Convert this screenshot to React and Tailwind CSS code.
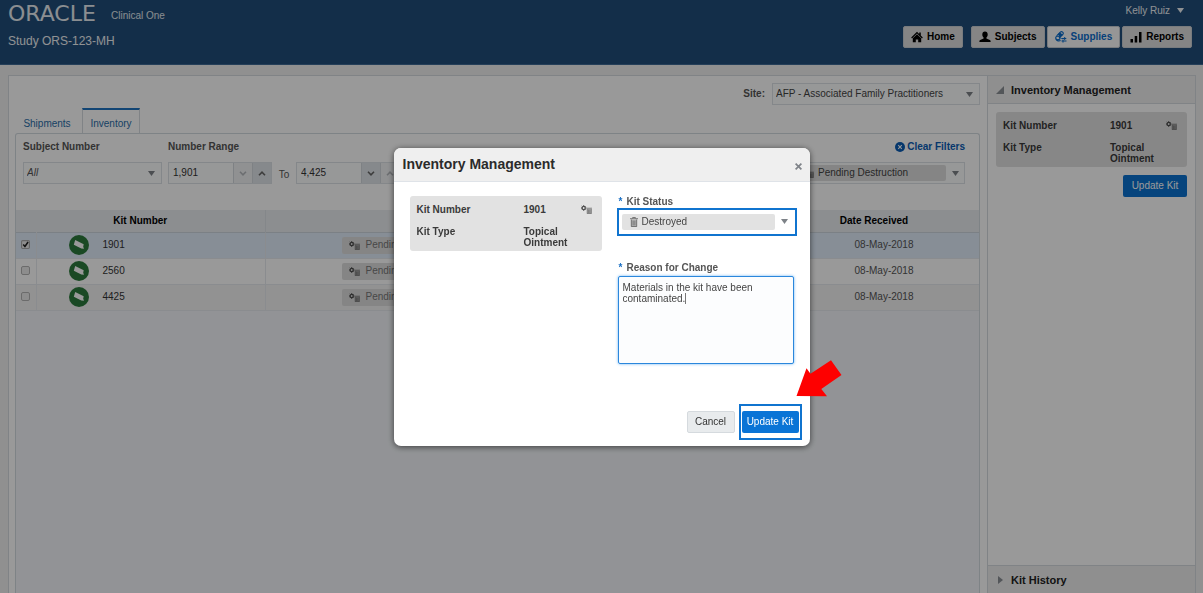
import React from "react";

const kits = [
  { id: "1901", selected: true, date: "08-May-2018" },
  { id: "2560", selected: false, date: "08-May-2018" },
  { id: "4425", selected: false, date: "08-May-2018" },
];

function Caret({ className = "text-[#7d8288]" }) {
  return (
    <svg className={"h-[5px] w-[7px] shrink-0 " + className} viewBox="0 0 7 5" fill="currentColor" aria-hidden="true">
      <path d="M0 0h7L3.5 5z" />
    </svg>
  );
}

function Chevron({ up, className }) {
  return (
    <svg className={"h-[5px] w-2 " + className} viewBox="0 0 8 5" fill="none" stroke="currentColor" strokeWidth="1.6" aria-hidden="true">
      <path d={up ? "M1 4.2 4 1.2l3 3" : "M1 .8l3 3 3-3"} />
    </svg>
  );
}

function HomeIcon() {
  return (
    <svg className="h-3 w-3" viewBox="0 0 12 12" fill="currentColor" aria-hidden="true">
      <path d="M6 .8 8.2 3V1.4h1.6v3.2l2 2-.8.8L6 2.6 1 7.400l-.8-.8z" />
      <path d="M6 3.300 10.200 7.300V11.300H7.200V8.500H4.800V11.300H1.800V7.300z" />
    </svg>
  );
}

function PersonIcon() {
  return (
    <svg className="h-3 w-3" viewBox="0 0 12 12" fill="currentColor" aria-hidden="true">
      <path d="M6 .6c1.700 0 2.700 1.200 2.700 2.800 0 1.300-.5 2.500-1.300 3.100v1l3.400 1.400c.6.3.8.7.8 1.300v.8H.4v-.8c0-.6.2-1 .8-1.300l3.400-1.400v-1C3.800 5.900 3.300 4.700 3.300 3.400 3.300 1.800 4.300.6 6 .6z" />
    </svg>
  );
}

function SuppliesIcon() {
  return (
    <svg className="h-3 w-3" viewBox="0 0 12 12" fill="none" stroke="currentColor" aria-hidden="true">
      <path d="M1.600 4.800 5.300 1.200a1.700 1.700 0 0 1 2.500 2.300L4 7" strokeWidth="1.100" />
      <path d="M2.600 3.600 5 1.300l2.600 2.500L5.200 6z" fill="currentColor" stroke="none" />
      <ellipse cx="2.900" cy="7" rx="2.200" ry="1.700" strokeWidth="1.100" />
      <path d="M1 8.300c.8 1.600 3 2 4.600 1.200" strokeWidth="1.200" />
      <path d="M6.300 7.500h5M9.700 6v3M6.500 10h5M8 8.600v3" strokeWidth="1" />
    </svg>
  );
}

function BarsIcon() {
  return (
    <svg className="h-3 w-3" viewBox="0 0 12 12" fill="currentColor" aria-hidden="true">
      <path d="M.5 8H3v3.500H.5zM4.700 5h2.500v6.500H4.700zM9 1h2.500v10.500H9z" />
    </svg>
  );
}

function TrashIcon() {
  return (
    <svg className="h-[10px] w-2 shrink-0" viewBox="0 0 8 10" aria-hidden="true">
      <path d="M1 2.500h6V10H1z" fill="#b5b5b5" />
      <path d="M0 1.700h8M2.600 1.500V.5h2.800v1M1.300 2.500v7h5.400v-7M3.100 3.500v5M4.900 3.500v5" fill="none" stroke="#6c6c6c" strokeWidth=".9" />
    </svg>
  );
}

function PendingIcon() {
  return (
    <svg className="h-[9px] w-[11px] shrink-0" viewBox="0 0 11 9" fill="none" aria-hidden="true">
      <circle cx="2.700" cy="3" r="1.600" stroke="#4c4c4c" strokeWidth="1.300" />
      <path d="M2.700 0v1M2.700 5v1M0 3h1M4.400 3h1M.7 1l.7.7M4 4.300l.7.7M.7 5l.7-.7M4 1.700l.7-.7" stroke="#4c4c4c" strokeWidth=".8" />
      <path d="M6 3.500h4.500V9H6z" fill="#a8a8a8" />
      <path d="M5.400 3.200H11M6.200 4v4.700h4.100V4M7.600 4.500v3.600M8.900 4.500v3.600" stroke="#737373" strokeWidth=".8" />
    </svg>
  );
}

function KitIcon() {
  return (
    <svg className="h-5 w-5" viewBox="0 0 20 20" aria-hidden="true">
      <circle cx="10" cy="10" r="10" fill="#2c7b3c" />
      <path d="M6.200 4.900 14.700 9.200 14.200 11.800 15 13.800 12.300 13.500 4.800 9.700z" fill="#fff" />
    </svg>
  );
}

function NavButton({ icon, children, active }) {
  return (
    <button
      type="button"
      className={
        "flex h-[22px] items-center gap-1 rounded-[2px] border border-[#c9cdd2] px-[7px] font-bold " +
        (active ? "bg-[#fbfbfb] text-[#0a6ccb]" : "bg-[#dedede] text-black")
      }
    >
      {icon}
      {children}
    </button>
  );
}

function Spinner({ label, value, downEnabled, upEnabled }) {
  return (
    <div className="flex h-[22px] w-[104px] border border-[#dde2e6] bg-[#fcfdfe]">
      <input aria-label={label} defaultValue={value} className="w-0 flex-1 bg-transparent px-1 text-[#333] outline-none" />
      <button
        type="button"
        aria-label={"Decrease " + label}
        className={"flex w-[19px] items-center justify-center border-l border-[#d3d7dc] " + (downEnabled ? "bg-[#dfe4e9]" : "bg-[#f0f2f4]")}
      >
        <Chevron className={downEnabled ? "text-[#666]" : "text-[#b4b8bc]"} />
      </button>
      <button
        type="button"
        aria-label={"Increase " + label}
        className={"flex w-[19px] items-center justify-center border-l border-[#d3d7dc] " + (upEnabled ? "bg-[#dfe4e9]" : "bg-[#f0f2f4]")}
      >
        <Chevron up className={upEnabled ? "text-[#666]" : "text-[#b4b8bc]"} />
      </button>
    </div>
  );
}

function KitCard() {
  return (
    <dl className="grid grid-cols-[107px_1fr_auto] gap-y-[11px] rounded-[3px] bg-[#e2e2e2] px-[7px] pt-2 pb-[3px] font-bold leading-[11px] text-[#3a3a3a]">
      <dt>Kit Number</dt>
      <dd>1901</dd>
      <dd className="pr-[3px] pt-px">
        <PendingIcon />
      </dd>
      <dt>Kit Type</dt>
      <dd className="col-span-2 w-[60px]">Topical Ointment</dd>
    </dl>
  );
}

function Header() {
  return (
    <header className="flex h-[65px] shrink-0 justify-between border-b border-[#3f6a94] bg-[#204e7a] pl-2 pr-[11px] text-white">
      <div>
        <div className="flex h-7 items-center">
          <div className="w-[103px] font-['DejaVu_Sans',sans-serif] text-[22px] leading-6 text-[#e8edf2]">ORACLE</div>
          <div className="pt-[3px] text-[#e3eaf0]">Clinical One</div>
        </div>
        <h1 className="pt-[5px] text-[12px] leading-4 text-[#f0f3f6]">Study ORS-123-MH</h1>
      </div>
      <div className="flex flex-col items-end">
        <button type="button" className="mr-2 flex h-[26px] items-center gap-[7px] pb-[5px] text-[#eef2f5]">
          Kelly Ruiz
          <Caret className="text-[#eef2f5]" />
        </button>
        <nav className="flex gap-[2px]">
          <div className="mr-[6px]">
            <NavButton icon={<HomeIcon />}>Home</NavButton>
          </div>
          <NavButton icon={<PersonIcon />}>Subjects</NavButton>
          <NavButton icon={<SuppliesIcon />} active>
            Supplies
          </NavButton>
          <NavButton icon={<BarsIcon />}>Reports</NavButton>
        </nav>
      </div>
    </header>
  );
}

function Filters() {
  return (
    <div className="flex h-[76px] items-start gap-[6px] pl-[7px] pr-[14px] pt-[7px]">
      <div className="w-[139px]">
        <label htmlFor="subject" className="block h-[21px] font-bold leading-3 text-[#555]">
          Subject Number
        </label>
        <div className="flex h-[22px] items-center border border-[#dde2e6] bg-[#fcfdfe] pr-[6px]">
          <select id="subject" className="w-0 flex-1 appearance-none bg-transparent px-[3px] italic text-[#555] outline-none">
            <option>All</option>
          </select>
          <Caret />
        </div>
      </div>
      <fieldset>
        <legend className="block h-[21px] font-bold leading-3 text-[#555]">Number Range</legend>
        <div className="flex items-center">
          <Spinner label="range start" value="1,901" upEnabled />
          <span className="w-6 pt-1 text-center text-[#555]">To</span>
          <Spinner label="range end" value="4,425" downEnabled />
        </div>
      </fieldset>
      <div className="ml-auto w-[172px]">
        <div className="flex h-[21px] items-start justify-end">
          <button type="button" className="flex items-center gap-[2px] font-bold leading-3 text-[#0a5cb5]">
            <svg className="h-[10px] w-[10px]" viewBox="0 0 10 10" aria-hidden="true">
              <circle cx="5" cy="5" r="5" fill="currentColor" />
              <path d="M3.200 3.200l3.600 3.600M6.800 3.200 3.200 6.800" stroke="#fff" strokeWidth="1.100" />
            </svg>
            Clear Filters
          </button>
        </div>
        <div className="flex h-[22px] items-center gap-[6px] border border-[#dde2e6] bg-[#fcfdfe] pl-[3px] pr-[5px]">
          <div className="flex h-4 flex-1 items-center gap-1 rounded-[2px] bg-[#dedede] pl-[6px]">
            <PendingIcon />
            <select aria-label="Status filter" className="w-0 flex-1 appearance-none bg-transparent text-[#444] outline-none">
              <option>Pending Destruction</option>
            </select>
          </div>
          <Caret />
        </div>
      </div>
    </div>
  );
}

function KitTable() {
  return (
    <table className="w-full table-fixed border-collapse">
      <colgroup>
        <col className="w-[20px]" />
        <col className="w-[229px]" />
        <col />
        <col className="w-[210px]" />
      </colgroup>
      <thead>
        <tr className="h-[22px] border-b border-[#cdd6de] bg-[#eaedf0] text-black">
          <th colSpan={2} className="border-r border-[#dde2e6] font-bold">Kit Number</th>
          <th className="font-bold">Status</th>
          <th className="font-bold">Date Received</th>
        </tr>
      </thead>
      <tbody className="text-[#333]">
        {kits.map((kit, i) => (
          <tr
            key={kit.id}
            className={"h-[26px] border-b border-[#e6eaee] " + (kit.selected ? "bg-[#e1edfb]" : i % 2 ? "bg-white" : "bg-[#f3f3f3]")}
          >
            <td className="border-r border-[#e6eaee] p-0 align-top">
              <label className="block pl-[5px] pt-[7px]">
                <input
                  type="checkbox"
                  aria-label={"Select kit " + kit.id}
                  defaultChecked={kit.selected}
                  className="peer block h-[9px] w-[9px] appearance-none rounded-[2px] border border-[#b3b3b3] bg-[#ececec] checked:hidden"
                />
                <svg className="hidden h-[9px] w-[9px] peer-checked:block" viewBox="0 0 8 8" aria-hidden="true">
                  <rect x=".5" y=".5" width="7" height="7" rx="1" fill="#eee" stroke="#aaa" />
                  <path d="M2 4l1.500 1.700L6.300 1.800" fill="none" stroke="#222" strokeWidth="1.400" />
                </svg>
              </label>
            </td>
            <td className="border-r border-[#e6eaee] p-0">
              <div className="flex items-center gap-[14px] pl-8">
                <KitIcon />
                {kit.id}
              </div>
            </td>
            <td className="p-0">
              <div className="ml-[76px] flex h-[17px] w-[150px] items-center gap-[6px] rounded-[2px] bg-[#dedede] pl-[7px] text-[#777]">
                <PendingIcon />
                Pending Destruction
              </div>
            </td>
            <td className="p-0 pl-5 text-center text-[#555]">{kit.date}</td>
          </tr>
        ))}
      </tbody>
    </table>
  );
}

function Inventory() {
  return (
    <section className="flex min-w-0 flex-1 flex-col pl-[6px] pr-[7px] pt-[7px]">
      <div className="flex items-center justify-end gap-[7px]">
        <label htmlFor="site" className="font-bold text-[#555]">
          Site:
        </label>
        <div className="flex h-[22px] w-52 items-center border border-[#dde2e6] bg-[#fcfdfe] pr-[6px]">
          <select id="site" className="w-0 flex-1 appearance-none bg-transparent px-[3px] text-[#444] outline-none">
            <option>AFP - Associated Family Practitioners</option>
          </select>
          <Caret />
        </div>
      </div>
      <div role="tablist" className="-mb-px mt-[3px] flex h-[26px] text-[#2a6da8]">
        <button type="button" role="tab" aria-selected="false" className="w-[67px] pr-[3px] pt-[5px] text-center">
          Shipments
        </button>
        <button type="button" role="tab" aria-selected="true" className="w-[58px] border-x border-t-2 border-x-[#d6dbe0] border-t-[#1f74c1] bg-white pt-[3px] text-center">
          Inventory
        </button>
      </div>
      <div className="flex flex-1 flex-col rounded-t-[3px] border-x border-t border-[#d3dae0]">
        <Filters />
        <div className="flex-1 bg-[#f3f6fa]">
          <KitTable />
        </div>
      </div>
    </section>
  );
}

function Sidebar() {
  return (
    <aside className="flex w-52 shrink-0 flex-col border-l border-[#d6dbe0]">
      <h2>
        <button type="button" className="flex h-7 w-full items-center gap-[7px] border-b border-[#d6dbe0] bg-[#efefef] pl-2 text-[11px] font-bold text-[#222]">
          <svg className="h-2 w-2" viewBox="0 0 8 8" fill="#8a8f95" aria-hidden="true">
            <path d="M8 0v8H0z" />
          </svg>
          Inventory Management
        </button>
      </h2>
      <div className="flex flex-1 flex-col items-stretch gap-2 p-2">
        <KitCard />
        <button type="button" className="h-[22px] w-16 self-end rounded-[2px] bg-[#0a72d1] text-white">
          Update Kit
        </button>
      </div>
      <h2>
        <button type="button" className="flex h-7 w-full items-center gap-2 border-t border-[#d6dbe0] bg-[#efefef] pl-[10px] text-[11px] font-bold text-[#222]">
          <svg className="h-2 w-[5px]" viewBox="0 0 5 8" fill="#8a8f95" aria-hidden="true">
            <path d="M0 0l5 4-5 4z" />
          </svg>
          Kit History
        </button>
      </h2>
    </aside>
  );
}

function Modal() {
  return (
    <div className="fixed inset-0 flex items-center justify-center bg-black/40">
      <div role="dialog" aria-modal="true" aria-labelledby="dialog-title" className="relative w-[416px] rounded-[7px] bg-white shadow-[0_1px_6px_rgba(0,0,0,0.6)]">
        <div className="flex h-[34px] items-center justify-between rounded-t-[7px] border-b border-[#dfe3e8] bg-[#efefef] pl-[9px] pr-2">
          <h2 id="dialog-title" className="text-[14px] font-bold leading-5 text-[#2b2b2b]">
            Inventory Management
          </h2>
          <button type="button" aria-label="Close" className="pt-1 text-[#7f8389]">
            <svg className="h-[7px] w-[7px]" viewBox="0 0 7 7" stroke="currentColor" strokeWidth="1.700" aria-hidden="true">
              <path d="M.6.6l5.800 5.800M6.400.6.600 6.400" />
            </svg>
          </button>
        </div>
        <div className="flex items-start justify-between pl-4 pr-[13px] pt-[14px]">
          <div className="w-48">
            <KitCard />
          </div>
          <div className="w-[180px]">
            <label htmlFor="status" className="flex h-3 gap-1 font-bold leading-3 text-[#555]">
              <span className="pl-[2px] text-[#1c70c4]">*</span>
              Kit Status
            </label>
            <div className="flex h-7 items-center gap-[6px] border-2 border-[#1074cf] pl-[3px] pr-[7px]">
              <div className="flex h-4 flex-1 items-center gap-1 rounded-[2px] bg-[#e2e2e2] pl-2">
                <TrashIcon />
                <select id="status" className="w-0 flex-1 appearance-none bg-transparent text-[#444] outline-none">
                  <option>Destroyed</option>
                </select>
              </div>
              <Caret />
            </div>
            <label htmlFor="reason" className="mt-[26px] flex h-[14px] gap-1 font-bold leading-3 text-[#555]">
              <span className="pl-[2px] text-[#1c70c4]">*</span>
              Reason for Change
            </label>
            <div className="relative px-px">
              <textarea
                id="reason"
                defaultValue="Materials in the kit have been contaminated."
                className="block h-[88px] w-[176px] resize-none rounded-[2px] border border-[#2b87dc] bg-[#fcfdfe] px-1 py-[5px] leading-[11px] text-[#444] shadow-[0_0_3px_#6db3f2] outline-none"
              />
              <span className="absolute left-[68px] top-[17px] h-[11px] w-px bg-[#777]" />
            </div>
          </div>
        </div>
        <div className="flex items-center justify-end gap-1 pb-[6px] pr-2 pt-10">
          <button type="button" className="h-[22px] w-12 rounded-[2px] border border-[#d5dade] bg-[#e8ebed] text-[#333]">
            Cancel
          </button>
          <div className="border-2 border-[#1074cf] px-px py-[5px]">
            <button type="button" className="block h-[22px] w-[57px] rounded-[2px] bg-[#0a74d6] text-white">
              Update Kit
            </button>
          </div>
        </div>
        <svg className="absolute left-[402px] top-[212px] h-[37px] w-[46px]" viewBox="0 0 46 37" fill="#fe0000" aria-hidden="true">
          <path d="M.5 36 10.500 8.300 14.500 13.700 35 .3 45.500 15 25.300 29 31 36.300z" />
        </svg>
      </div>
    </div>
  );
}

export default function App() {
  return (
    <div className="flex min-h-screen flex-col bg-[#f0f0f0] font-['Liberation_Sans',Arial,sans-serif] text-[10px] leading-[12px]">
      <Header />
      <main className="flex flex-1 pl-2 pr-[7px] pt-[10px]">
        <div className="flex flex-1 border-x border-t border-[#d6dbe0] bg-white">
          <Inventory />
          <Sidebar />
        </div>
      </main>
      <Modal />
    </div>
  );
}
